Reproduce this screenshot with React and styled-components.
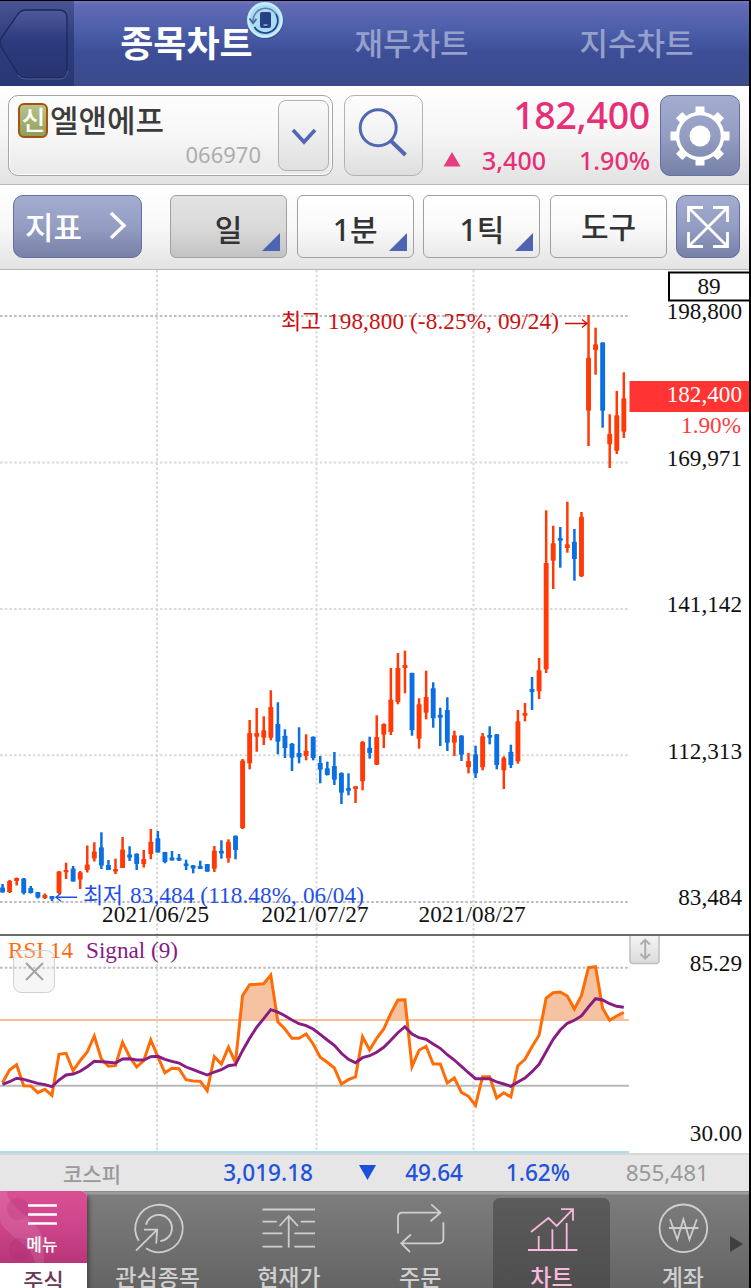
import React from "react";
import styled, { createGlobalStyle } from "styled-components";

const SANS = `"Noto Sans", "Noto Sans CJK KR", sans-serif`;
const HANGUL = `"Noto Sans CJK KR", sans-serif`;
const SERIF = `"Liberation Serif", "Noto Sans CJK KR", serif`;

const GlobalStyle = createGlobalStyle`
  * {
    box-sizing: border-box;
  }
  body {
    margin: 0;
    background: #000;
    overflow: hidden;
  }
`;

const Screen = styled.div`
  width: 751px;
  height: 1288px;
  display: flex;
  flex-direction: column;
  overflow: hidden;
  background: #fff;
  border-top: 1px solid #000;
  border-right: 2px solid #000;
  font-family: ${SANS};
  white-space: nowrap;

  svg {
    display: block;
    flex-shrink: 0;
  }
`;

/* ---- header ---- */

const Header = styled.div`
  height: 85px;
  flex-shrink: 0;
  display: flex;
  background: linear-gradient(#7479bd 0, #646bb6 3px, #4c5ea9 30px, #3d4e97 52px, #3c4a8a 100%);
`;

const BackBox = styled.div`
  width: 74px;
  background: linear-gradient(#4a5491, #2f3d7e 45%, #283775);
`;

const HeaderTabs = styled.div`
  flex: 1;
  display: grid;
  grid-template-columns: 225px 225px 225px;
`;

const HeaderTab = styled.div`
  position: relative;
  display: flex;
  justify-content: center;
  align-items: center;
  font-family: ${HANGUL};
  font-size: ${(props) => (props.$active ? "36px" : "31px")};
  font-weight: ${(props) => (props.$active ? 700 : 500)};
  color: ${(props) => (props.$active ? "#fff" : "#95a0cd")};
  padding-bottom: ${(props) => (props.$active ? "6px" : "4px")};
`;

const RotateBadge = styled.svg`
  position: absolute;
  left: 171px;
  top: 0;
`;

/* ---- stock row ---- */

const StockRow = styled.div`
  height: 99px;
  flex-shrink: 0;
  display: flex;
  padding: 9px 9px 0 8px;
  background: linear-gradient(#fff, #f6f6f6 50%, #e2e2e2);
  border-bottom: 1px solid #b9b9b9;
`;

const StockBox = styled.div`
  width: 325px;
  height: 81px;
  display: flex;
  border: 1px solid #a5a5a5;
  border-radius: 10px;
  background: linear-gradient(#fdfdfd, #f7f7f7 50%, #e9e9e9);
  box-shadow: inset 0 0 0 1px #fff;
  padding: 4px 3px 0 9px;
`;

const StockInfo = styled.div`
  flex: 1;
  display: flex;
  flex-direction: column;
`;

const StockName = styled.div`
  height: 37px;
  display: flex;
  align-items: center;
  gap: 2px;
  font-family: ${HANGUL};
  font-weight: 500;
  font-size: 31px;
  line-height: 36px;
  color: #3c3c3c;
`;

const CreditTag = styled.span`
  width: 30px;
  height: 35px;
  margin-top: 3px;
  border: 2px solid #a85210;
  border-radius: 6px;
  background: linear-gradient(#b9c48d, #8f9e57);
  color: #fff;
  font-size: 26px;
  line-height: 28px;
  text-align: center;
  letter-spacing: -1px;
`;

const StockCode = styled.div`
  padding-right: 17px;
  text-align: right;
  font-size: 22px;
  line-height: 35px;
  color: #adadad;
`;

const DropButton = styled.div`
  width: 51px;
  height: 71px;
  display: flex;
  align-items: center;
  justify-content: center;
  border: 1px solid #b0b0b0;
  border-radius: 8px;
  background: linear-gradient(#fafafa, #e0e0e0);
`;

const SearchButton = styled.div`
  width: 79px;
  height: 81px;
  margin-left: 11px;
  border: 1px solid #b3b3b3;
  border-radius: 10px;
  background: linear-gradient(#fdfdfd, #f2f2f2 50%, #dedede);
`;

const PriceBlock = styled.div`
  flex: 1;
  display: flex;
  flex-direction: column;
  padding-right: 10px;
  font-weight: 500;
  color: #e62f77;
`;

const Price = styled.div`
  height: 43px;
  text-align: right;
  font-size: 37.5px;
  line-height: 40px;
  letter-spacing: -0.3px;
`;

const PriceChange = styled.div`
  display: grid;
  grid-template-columns: 18px 85px 1fr;
  align-items: center;
  margin-left: 20px;
  height: 44px;
  text-align: right;
  font-size: 25px;
  line-height: 44px;
`;

const PurpleButton = styled.div`
  width: ${(props) => props.$width}px;
  height: ${(props) => props.$height}px;
  display: flex;
  align-items: center;
  justify-content: center;
  flex-shrink: 0;
  border: 1px solid #6270a3;
  border-radius: 10px;
  background: linear-gradient(#a3add0, #949dc2 50%, #7780a6);
  color: #fff;
  font-family: ${HANGUL};
  font-size: 31px;
  font-weight: 500;
`;

/* ---- toolbar ---- */

const Toolbar = styled.div`
  height: 85px;
  flex-shrink: 0;
  display: flex;
  padding: 10px 9px 0 13px;
  background: linear-gradient(#fff, #f8f8f8 50%, #e3e3e3);
  border-bottom: 1px solid #b5b5b5;
`;

const IndicatorButton = styled(PurpleButton)`
  justify-content: space-between;
  padding: 0 14px 3px 11px;
  margin-right: 28px;
`;

const PeriodGroup = styled.div`
  flex: 1;
  display: grid;
  grid-template-columns: repeat(4, 117px);
  gap: 9.7px;
`;

const PeriodButton = styled.div`
  position: relative;
  height: 63px;
  border: 1px solid #a0a0a0;
  border-radius: 6px;
  background: ${(props) =>
    props.$active
      ? "linear-gradient(#e2e2e2, #dadada 50%, #c3c3c3)"
      : "linear-gradient(#fff, #fafafa 50%, #e9e9e9)"};
  font-family: ${SANS};
  font-size: 30px;
  font-weight: 500;
  line-height: ${(props) => (props.$corner ? "68px" : "62px")};
  text-align: center;
  color: #333;
`;

const Corner = styled.span`
  position: absolute;
  right: 6px;
  bottom: 6px;
  border-left: 18px solid transparent;
  border-bottom: 18px solid #4e64b0;
`;

/* ---- charts ---- */

const PaneDivider = styled.div`
  height: 2px;
  flex-shrink: 0;
  background: #6c6a6b;
`;

/* ---- index ticker ---- */

const Ticker = styled.div`
  height: 38px;
  flex-shrink: 0;
  display: grid;
  grid-template-columns: 121px 192px 63px 87px 107px 139px;
  align-items: center;
  justify-items: end;
  background: #e6e6e6;
  border-top: 2px solid #d7d7d7;
  font-size: 22.6px;
  font-weight: 500;
  line-height: 34px;
  padding-bottom: 1px;
  color: #2251dc;
`;

const TickerMuted = styled.span`
  color: #999;
  font-weight: ${(props) => (props.$label ? 500 : 400)};
  font-family: ${(props) => (props.$label ? HANGUL : SANS)};
  font-size: ${(props) => (props.$label ? "21px" : "22.5px")};
`;

/* ---- bottom navigation ---- */

const Nav = styled.div`
  position: relative;
  height: 97px;
  flex-shrink: 0;
  display: flex;
  background: linear-gradient(#7b7b7b 0, #9c9c9c 1px, #9c9c9c 3px, #7d7d7d 4px, #646464 100%);
`;

const MenuTab = styled.div`
  width: 87px;
  display: flex;
  flex-direction: column;
  background: #fff;
  border-top-right-radius: 6px;
  overflow: hidden;
  margin-right: 5px;
  box-shadow: 2px 4px 4px #444;
`;

const MenuTop = styled.div`
  position: relative;
  height: 72px;
  flex-shrink: 0;
  background: linear-gradient(#da4f94, #cf468c 45%, #b83579);
`;

const MenuName = styled.div`
  font-family: ${HANGUL};
  font-size: 22px;
  font-weight: 500;
  line-height: 32px;
  text-align: center;
  color: #693955;
`;

const NavItem = styled.div`
  width: 131.3px;
  display: flex;
  flex-direction: column;
  align-items: center;
  padding-top: 7px;
`;

const NavInner = styled.div`
  width: 117px;
  height: 100px;
  display: flex;
  flex-direction: column;
  align-items: center;
  border-radius: 7px 7px 0 0;
  background: ${(props) =>
    props.$active ? "linear-gradient(#5b5b5b, #4e4e4e)" : "transparent"};
  color: ${(props) => (props.$active ? "#f9b9dc" : "#cfcfcf")};
  font-family: ${HANGUL};
  font-size: 23px;
  font-weight: 500;
  line-height: 28px;
`;

const MoreArrow = styled.div`
  position: absolute;
  right: 6px;
  top: 45px;
  border-left: 13px solid #3f3f3f;
  border-top: 8px solid transparent;
  border-bottom: 8px solid transparent;
`;

// [up, high, bodyTop, bodyBottom, low], in pane coordinates
const candles = [
  [0, 884, 887.5, 892.5, 892.5], [1, 880, 881, 892, 893], [1, 877.5, 878, 881, 885.5],
  [0, 878, 878.5, 893, 894.5], [0, 886, 888, 893, 893.5], [0, 892, 892, 897.5, 898.5],
  [1, 893.5, 895, 898, 899], [0, 896, 896, 899, 901], [1, 871, 871.5, 893, 894],
  [1, 862.7, 870, 872.3, 879], [0, 866, 868.5, 881.5, 881.5], [1, 871, 872.3, 879.5, 889],
  [1, 845.5, 864.5, 870, 872.5], [1, 842.3, 851.5, 858.5, 861.5], [0, 832.3, 847.3, 865.5, 869],
  [0, 860, 865, 870, 870], [1, 858.7, 869, 871.5, 874], [1, 837, 849.5, 868, 868],
  [0, 846.3, 854.5, 857.5, 861], [0, 853.3, 853.7, 864, 870], [1, 850, 859, 864, 867.5],
  [1, 829, 841.7, 854, 859.3], [0, 831, 838.3, 852.5, 852.5], [0, 852, 852, 862, 863.3],
  [0, 851, 857.5, 860.5, 860.5], [0, 854, 857.7, 860.5, 861], [0, 859.7, 863.5, 866, 870],
  [0, 865, 865.3, 868.5, 873.3], [0, 860.7, 866, 869, 869], [0, 864, 864, 871.7, 871.7],
  [1, 846, 850.5, 868.7, 872], [0, 840.3, 850.7, 853.5, 858.7], [1, 839.3, 841.7, 858.3, 862.7],
  [0, 835.5, 835.7, 850, 859.3], [1, 759, 760.5, 828, 829], [1, 720, 733, 763.3, 769.3],
  [1, 708, 733, 736.7, 751.7], [1, 716.3, 730.3, 737.7, 745], [1, 690.3, 707, 737.7, 740.3],
  [0, 702.3, 724, 741.7, 754.3], [0, 729.3, 735.7, 748, 758], [0, 743, 743.7, 757.7, 771],
  [0, 727.3, 753, 757.3, 763.3], [1, 734.3, 750.7, 756, 760.3], [0, 736.5, 736.7, 758, 760.3],
  [0, 756, 763, 769.7, 783.3], [0, 761.7, 768.3, 775, 775.5], [0, 752, 766, 779.7, 785],
  [0, 772.3, 773, 792.7, 804], [0, 773.3, 788, 790.7, 795.3], [1, 786.3, 786.3, 789, 803],
  [1, 741, 742, 781.3, 790.3], [0, 736.7, 747.7, 753, 758.7], [1, 715.3, 737, 764.7, 765],
  [1, 723.3, 724, 734.7, 748], [1, 668, 699.7, 732, 735], [1, 653, 668, 702, 704.3],
  [1, 650.7, 665, 668, 693.3], [0, 672.7, 673, 730, 735.7], [1, 698.3, 704.3, 738.7, 748.7],
  [1, 670.7, 697, 712.7, 719.3], [0, 682.3, 688.3, 718.3, 727.7], [0, 707.7, 714.7, 717.7, 746],
  [0, 697.3, 710, 742.7, 751], [1, 730.7, 735.3, 742.7, 756], [0, 735.3, 735.5, 754.7, 761],
  [1, 753, 761, 767.3, 773.3], [0, 745.7, 754.3, 773.3, 778], [1, 733, 736.3, 767.3, 770.3],
  [0, 726.3, 735, 737.7, 744.3], [0, 734, 734.3, 765, 769.3], [1, 756.3, 758, 770.3, 789],
  [0, 744.7, 751.7, 765, 768], [1, 710, 721.3, 761.3, 763.7], [1, 703, 713, 715.7, 721.3],
  [0, 677, 689, 692, 710], [1, 658, 670.3, 691.3, 699], [1, 510.3, 563, 669.3, 673],
  [1, 525.7, 543.3, 560.7, 589], [0, 527, 538, 540.7, 567.7], [1, 501.7, 544.3, 548, 552.7],
  [0, 529, 541.7, 559, 580.7], [1, 512, 516.7, 576.3, 577], [1, 315, 357.7, 410.7, 446],
  [1, 327.7, 344.3, 350, 374.7], [0, 342.3, 342.5, 410.7, 427.7], [1, 414.3, 434, 444.3, 468],
  [1, 391, 415.3, 450.7, 454], [1, 372.3, 398.3, 431.7, 438],
];

const rsi = [
  1082.7, 1070, 1064.7, 1085.7, 1086, 1092.7, 1089.3, 1095.3, 1054.3, 1053.3, 1070.7, 1060.7,
  1052, 1036, 1059, 1066.3, 1065.7, 1042.3, 1056.7, 1067, 1060.7, 1040, 1056.7, 1072.7, 1068.3,
  1068.7, 1079.7, 1081, 1081.3, 1090.7, 1056.7, 1064, 1047.3, 1062.7, 995.7, 984.7, 984.3, 983.7,
  975, 1021.7, 1029, 1038.3, 1038.3, 1034, 1044, 1057.3, 1062.3, 1068, 1084, 1079.7, 1077,
  1036.7, 1050, 1038.3, 1029, 1013.3, 1000, 999.7, 1066.7, 1050.3, 1046.3, 1064, 1064, 1083,
  1078, 1092.3, 1096.3, 1105.3, 1076.7, 1076.7, 1098, 1092.7, 1097, 1065.7, 1059.3, 1046.7,
  1035.3, 998, 992.7, 992, 996, 1009, 995.7, 967.7, 966.7, 1008.3, 1020.3, 1016, 1012.3,
];

const signal = [
  1084.3, 1081.7, 1078.3, 1079.3, 1081.3, 1083.3, 1084.7, 1086.7, 1080, 1075, 1074, 1071.3,
  1066.7, 1061.3, 1061.7, 1062.3, 1063, 1059, 1058.7, 1060, 1060, 1056.7, 1056.3, 1059.3, 1061.3,
  1063, 1067, 1069.7, 1072.3, 1075, 1072, 1069.7, 1065.7, 1064.7, 1050.7, 1038.3, 1027.3, 1018.7,
  1009.7, 1012, 1015.7, 1020, 1023.7, 1025.7, 1029, 1034.3, 1040, 1045.3, 1053.3, 1059.3, 1062.7,
  1057.7, 1055.7, 1052.3, 1047.3, 1040.3, 1032.7, 1026.7, 1034, 1037.7, 1039.3, 1044, 1048.3,
  1054.7, 1060, 1066.3, 1072.7, 1078.7, 1078.7, 1078.7, 1082, 1084, 1086.3, 1082, 1078, 1071.7,
  1064.3, 1051.7, 1039.3, 1030, 1023.3, 1020.3, 1016, 1007, 998.7, 1000, 1003.7, 1006.3, 1007.3,
];

const candleX = (i) => 2.5 + i * 7.06;
const toPoints = (values) => values.map((y, i) => `${candleX(i)},${y}`).join(" ");

const gridX = [157, 316.5, 473.5];
const priceLevels = [
  ["198,800", 316],
  ["169,971", 462.5],
  ["141,142", 609],
  ["112,313", 755.3],
  ["83,484", 902],
];
const dates = [
  ["2021/06/25", 102],
  ["2021/07/27", 261.5],
  ["2021/08/27", 418.5],
];

function PriceChart() {
  return (
    <svg width="749" height="664" viewBox="0 270 749 664" fontFamily={SERIF} fontSize="23.2">
      <g stroke="#dadada" strokeWidth="2" strokeDasharray="2.6 2.1">
        {gridX.map((x) => (
          <line key={x} x1={x} x2={x} y1="270" y2="934" />
        ))}
        {priceLevels.map(([label, y], i) => (
          <line
            key={label}
            x1="0"
            x2="630"
            y1={y}
            y2={y}
            stroke={i === 0 || i === 4 ? "#bdbdbd" : "#dadada"}
          />
        ))}
      </g>
      {candles.map(([up, high, top, bottom, low], i) => (
        <g key={i} fill={up ? "#ff3a06" : "#0b6fe4"}>
          <rect x={candleX(i) - 1.2} y={high} width="2.5" height={low - high} />
          <rect x={candleX(i) - 2.4} y={top} width="4.9" height={bottom - top} rx="0.6" />
        </g>
      ))}
      <g fill="#cc1010">
        <text x="281" y="328.500" fontSize="22" fontFamily={HANGUL} textLength="40">최고</text>
        <text x="328" y="329" textLength="231">198,800 (-8.25%, 09/24)</text>
        <path d="M565 323.500h21M582 319.500l5 4l-5 4" fill="none" stroke="#cc1010" strokeWidth="1.4" />
      </g>
      <g fill="#1f4fe8">
        <text x="83" y="902.500" fontSize="22" fontFamily={HANGUL} textLength="40">최저</text>
        <text x="130" y="903" textLength="234">83,484 (118.48%, 06/04)</text>
        <path d="M77 897.300h-20M61 893.300l-5 4l5 4" fill="none" stroke="#1f4fe8" strokeWidth="1.4" />
      </g>
      {dates.map(([label, x]) => (
        <text key={label} x={x} y="922" textLength="107" fill="#111">{label}</text>
      ))}
      <g textAnchor="end" fill="#111">
        {priceLevels.map(([label, y]) => (
          <text key={label} x="742" y={y + 3.3}>{label}</text>
        ))}
      </g>
      <rect x="669" y="272.5" width="82" height="28" fill="#fff" stroke="#000" strokeWidth="2" />
      <text x="709" y="293.500" textAnchor="middle" fill="#111">89</text>
      <rect x="629.5" y="381" width="120" height="31" fill="#ff3433" />
      <text x="742" y="402.300" textAnchor="end" fill="#fff">182,400</text>
      <text x="741" y="433.300" textAnchor="end" fill="#ff3a3a">1.90%</text>
    </svg>
  );
}

function RsiChart() {
  return (
    <svg width="749" height="217" viewBox="0 936 749 217" fontFamily={SERIF} fontSize="23.2">
      <defs>
        <clipPath id="overbought">
          <rect x="0" y="936" width="749" height="84.5" />
        </clipPath>
        <linearGradient id="handle" x1="0" y1="0" x2="0" y2="1">
          <stop offset="0" stopColor="#f7f7f7" />
          <stop offset="1" stopColor="#dcdcdc" />
        </linearGradient>
      </defs>
      <g stroke="#dadada" strokeWidth="2" strokeDasharray="2.6 2.1">
        {gridX.map((x) => (
          <line key={x} x1={x} x2={x} y1="936" y2="1152" />
        ))}
        <line x1="0" x2="630" y1="967.7" y2="967.7" stroke="#bdbdbd" />
      </g>
      <text x="8" y="957.5" fill="#ff6a0a" textLength="65">RSI 14</text>
      <text x="86" y="957.5" fill="#861a86" textLength="92">Signal (9)</text>
      <g>
        <rect x="13.5" y="950.5" width="41" height="42" rx="8" fill="#e4e4e4" fillOpacity="0.35" stroke="#cfcfcf" />
        <path d="M26 963l17 17M43 963l-17 17" stroke="#a2a2a2" strokeWidth="2" />
      </g>
      <line x1="0" x2="629" y1="1085.8" y2="1085.8" stroke="#b7b9b7" strokeWidth="2" />
      <polygon
        points={`${candleX(0)},1200 ${toPoints(rsi)} ${candleX(88)},1200`}
        fill="#f5c3a2"
        clipPath="url(#overbought)"
      />
      <line x1="0" x2="629" y1="1020" y2="1020" stroke="#f8bd95" strokeWidth="2" />
      <polyline points={toPoints(rsi)} fill="none" stroke="#ff6c05" strokeWidth="3" />
      <polyline points={toPoints(signal)} fill="none" stroke="#881c82" strokeWidth="2.9" />
      <line x1="0" x2="629" y1="1152" y2="1152" stroke="#a5e0f6" strokeWidth="2" />
      <rect x="630" y="932" width="29" height="31.5" rx="3" fill="url(#handle)" stroke="#bfbfbf" strokeWidth="1.5" />
      <path d="M645.2 940v18M640.5 944.5l4.7-4.7l4.7 4.7M640.5 954l4.7 4.7l4.7-4.7" fill="none" stroke="#adadad" strokeWidth="2" />
      <g textAnchor="end" fill="#111">
        <text x="742" y="971.3">85.29</text>
        <text x="742" y="1141.3">30.00</text>
      </g>
    </svg>
  );
}

const navItems = [
  {
    name: "관심종목",
    icon: (
      <>
        <path d="M10.7 42.7A23.7 23.7 0 1 1 18 50.3" />
        <path d="M18 26.7A13.2 13.2 0 1 1 32.300 43.200M8 52.700L29.200 31.700M16 31.700h13.200L28.200 45.500" />
      </>
    ),
  },
  {
    name: "현재가",
    icon: (
      <path d="M3.500 11.500H56M3.500 23.700h14.200M41.700 23.700H56M3.500 35.300h20M35.400 35.300H56M3.500 48.700h20M35.400 48.700H56M29.700 49.500V18M20.500 28l9.200-10l9.200 10" />
    ),
  },
  {
    name: "주문",
    icon: (
      <path d="M8 35.500V19.200q0-4.500 4.500-4.500H50M41.300 6.300l9.200 8.400l-10 8.600M53.400 24.300v16.500q0 4.500-4.500 4.500H11.500M21 36.300l-9.700 9l8.700 8.700" />
    ),
  },
  {
    name: "차트",
    active: true,
    icon: (
      <path d="M6 52h49.400M16.700 52V38M30.400 52V31.300M44.700 52V25M9 34l17.400-14l8.300 8L51 11.200M39 11.200h12v11.500" />
    ),
  },
  {
    name: "계좌",
    icon: (
      <>
        <circle cx="30.400" cy="30.300" r="23.800" />
        <path d="M17 21.300L24.300 41.500L30.400 21.300L36.500 41.500L43.800 21.300M16 30h29.400" />
      </>
    ),
  },
];

export default function App() {
  return (
    <Screen>
      <GlobalStyle />
      <Header>
        <BackBox>
          <svg width="74" height="85" viewBox="0 1 74 85">
            <defs>
              <linearGradient id="back" x1="0" y1="0" x2="0" y2="1">
                <stop offset="0" stopColor="#4d5999" />
                <stop offset="0.45" stopColor="#2d3b7f" />
                <stop offset="1" stopColor="#26356f" />
              </linearGradient>
            </defs>
            <path d="M0 40L18 14q3-4 8-4h33q8 0 8 8v52q0 8-8 8H26q-5 0-8-4L0 45z" fill="url(#back)" stroke="#1d2858" strokeWidth="1.3" />
            <path d="M18 75q3 4 8 4h33q8 0 8.500-8" fill="none" stroke="#53609c" />
          </svg>
        </BackBox>
        <HeaderTabs>
          <HeaderTab $active>
            종목차트
            <RotateBadge width="40" height="40" viewBox="0 0 40 40">
              <circle cx="20.500" cy="20" r="18" fill="#27386f" opacity="0.5" />
              <circle cx="20" cy="19" r="18" fill="#aadcf3" />
              <circle cx="20" cy="19" r="16.500" fill="none" stroke="#c9edfa" strokeWidth="2" />
              <path d="M8 20A12.500 12.500 0 0 1 31 13" fill="none" stroke="#667db0" strokeWidth="1.6" />
              <path d="M31 13A12.500 12.500 0 0 1 9.500 26" fill="none" stroke="#24448d" strokeWidth="1.800" />
              <path d="M4.500 17.500l3.500 4.500l3.500-4" fill="none" stroke="#475d99" strokeWidth="1.800" />
              <rect x="15" y="11" width="11" height="16" rx="2" fill="#284084" />
              <path d="M18.500 24h4" stroke="#c9edfa" />
            </RotateBadge>
          </HeaderTab>
          <HeaderTab>재무차트</HeaderTab>
          <HeaderTab>지수차트</HeaderTab>
        </HeaderTabs>
      </Header>

      <StockRow>
        <StockBox>
          <StockInfo>
            <StockName>
              <CreditTag>신</CreditTag>
              엘앤에프
            </StockName>
            <StockCode>066970</StockCode>
          </StockInfo>
          <DropButton>
            <svg width="28" height="20" viewBox="0 0 28 20">
              <path d="M3 4l11 12L25 4" fill="none" stroke="#5267b2" strokeWidth="3.600" />
            </svg>
          </DropButton>
        </StockBox>
        <SearchButton>
          <svg width="77" height="79" viewBox="0 0 77 79">
            <circle cx="33.200" cy="31.800" r="18" fill="none" stroke="#5267b2" strokeWidth="3" />
            <path d="M46 45L60.500 59" stroke="#5267b2" strokeWidth="4" />
          </svg>
        </SearchButton>
        <PriceBlock>
          <Price>182,400</Price>
          <PriceChange>
            <svg width="18" height="16" viewBox="0 0 18 16">
              <path d="M9 0l8.500 14.500H0.500z" fill="#e93c80" />
            </svg>
            <span>3,400</span>
            <span>1.90%</span>
          </PriceChange>
        </PriceBlock>
        <PurpleButton $width={80} $height={81}>
          <svg width="62" height="62" viewBox="-31 -31 62 62">
            {[0, 45, 90, 135, 180, 225, 270, 315].map((angle) => (
              <rect key={angle} x="-4.500" y="-29.500" width="9" height="8" fill="#fff" transform={`rotate(${angle})`} />
            ))}
            <circle r="22.500" fill="none" stroke="#fff" strokeWidth="3.600" />
            <circle r="10.500" fill="#fff" />
          </svg>
        </PurpleButton>
      </StockRow>

      <Toolbar>
        <IndicatorButton $width={129} $height={63}>
          지표
          <svg width="18" height="28" viewBox="0 0 18 28">
            <path d="M2 2l13 12.500L2 27" fill="none" stroke="#fff" strokeWidth="3.400" />
          </svg>
        </IndicatorButton>
        <PeriodGroup>
          <PeriodButton $active $corner>일<Corner /></PeriodButton>
          <PeriodButton $corner>1분<Corner /></PeriodButton>
          <PeriodButton $corner>1틱<Corner /></PeriodButton>
          <PeriodButton>도구</PeriodButton>
        </PeriodGroup>
        <PurpleButton $width={64} $height={63}>
          <svg width="42" height="42" viewBox="0 0 42 42">
            <path
              d="M2 2L40 40M40 2L2 40M1.500 16V1.500H16M26 1.500h14.500V16M1.500 26v14.500H16M26 40.500h14.500V26"
              fill="none"
              stroke="#fff"
              strokeWidth="2.800"
            />
          </svg>
        </PurpleButton>
      </Toolbar>

      <PriceChart />
      <PaneDivider />
      <RsiChart />

      <Ticker>
        <TickerMuted $label>코스피</TickerMuted>
        <span>3,019.18</span>
        <svg width="17" height="15" viewBox="0 0 17 15">
          <path d="M0 0h17L8.500 15z" fill="#1a50dc" />
        </svg>
        <span>49.64</span>
        <span>1.62%</span>
        <TickerMuted>855,481</TickerMuted>
      </Ticker>

      <Nav>
        <MenuTab>
          <MenuTop>
            <svg width="87" height="72" viewBox="0 0 87 72">
              <path d="M0 0h7C7 18 40 28 44 50v22H35C34 52 0 44 0 26z" fill="#fff" opacity="0.1" />
              <circle cx="18" cy="18" r="11" fill="#9e2767" opacity="0.2" />
              <circle cx="20" cy="58" r="11" fill="#9e2767" opacity="0.2" />
              <path d="M28 14.500h29M28 23.500h29M28 32.500h29" stroke="#fff" strokeWidth="2.600" />
              <text x="42" y="60" textAnchor="middle" fill="#fff" fontFamily={HANGUL} fontSize="17" fontWeight="500">메뉴</text>
            </svg>
          </MenuTop>
          <MenuName>주식</MenuName>
        </MenuTab>
        {navItems.map((item) => (
          <NavItem key={item.name}>
            <NavInner $active={item.active}>
              <svg width="60" height="64" viewBox="0 0 60 64" fill="none" stroke="currentColor" strokeWidth="1.8">
                {item.icon}
              </svg>
              {item.name}
            </NavInner>
          </NavItem>
        ))}
        <MoreArrow />
      </Nav>
    </Screen>
  );
}
